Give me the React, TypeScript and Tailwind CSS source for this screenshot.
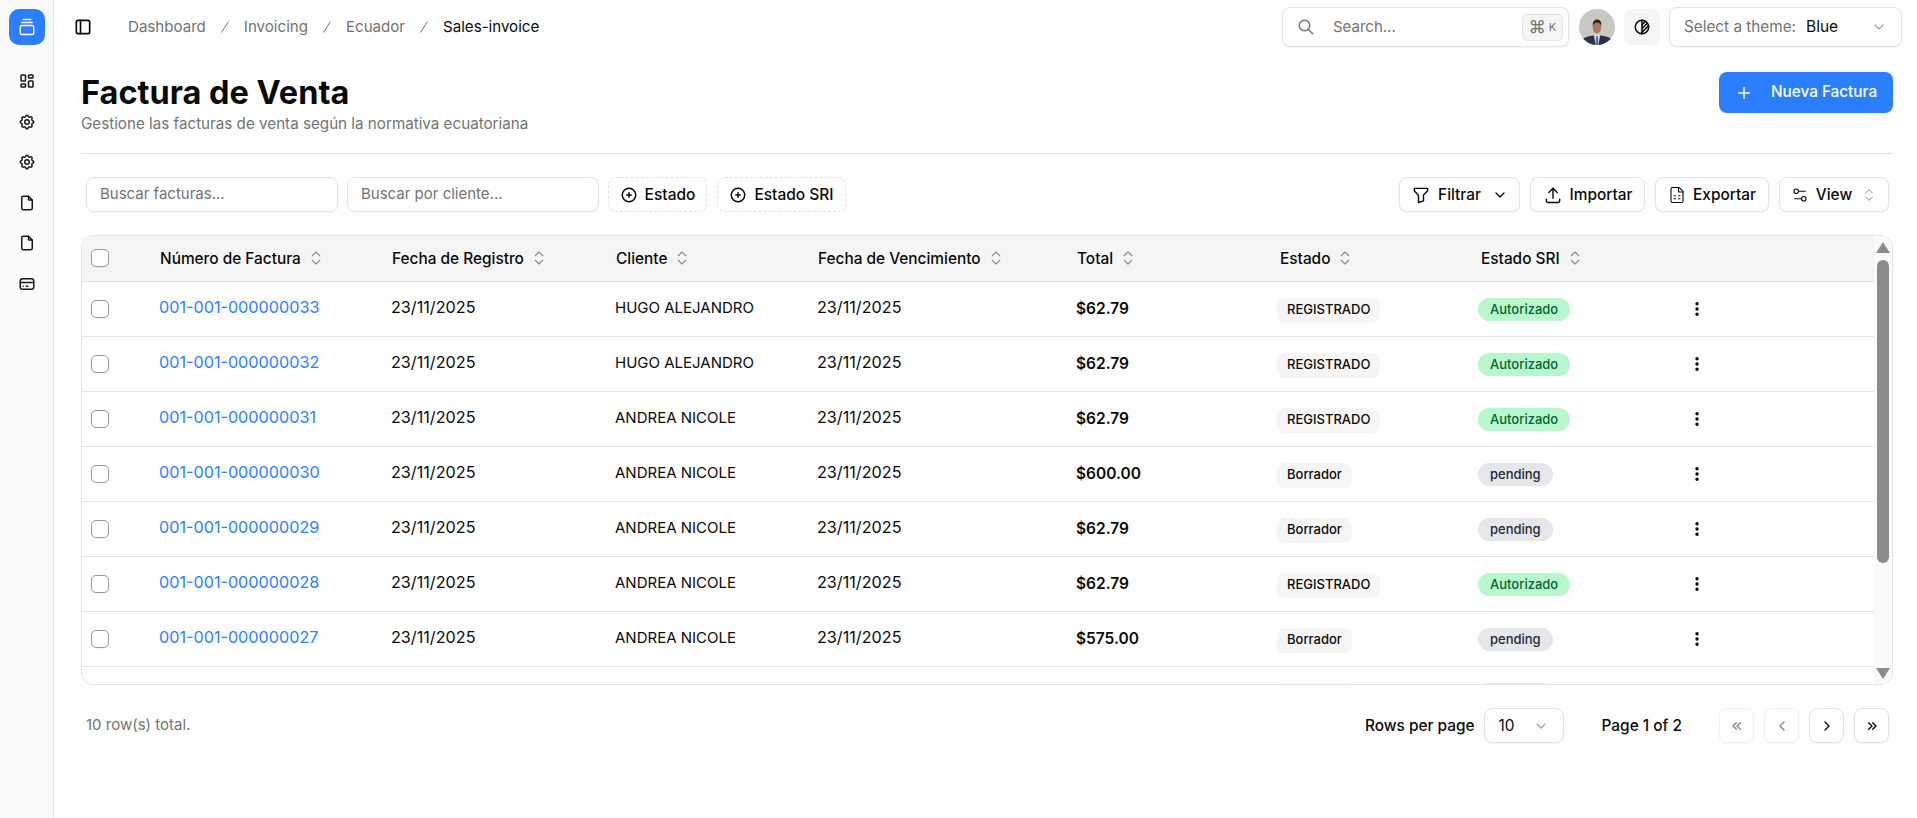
import {
  TbChevronDown,
  TbChevronLeft,
  TbChevronRight,
  TbChevronsLeft,
  TbChevronsRight,
  TbCircleHalf2,
  TbCirclePlus,
  TbCreditCard,
  TbDotsVertical,
  TbFile,
  TbFilter,
  TbLayoutDashboard,
  TbLayoutSidebar,
  TbPlus,
  TbSearch,
  TbSettings,
  TbUpload,
} from "react-icons/tb";
import { ChevronsUpDown, FileSpreadsheet, GalleryVerticalEnd, Settings2 } from "lucide-react";

type Row = {
  id: string;
  client: string;
  total: string;
  draft: boolean;
};

const rows: Row[] = [
  { id: "001-001-000000033", client: "HUGO ALEJANDRO", total: "$62.79", draft: false },
  { id: "001-001-000000032", client: "HUGO ALEJANDRO", total: "$62.79", draft: false },
  { id: "001-001-000000031", client: "ANDREA NICOLE", total: "$62.79", draft: false },
  { id: "001-001-000000030", client: "ANDREA NICOLE", total: "$600.00", draft: true },
  { id: "001-001-000000029", client: "ANDREA NICOLE", total: "$62.79", draft: true },
  { id: "001-001-000000028", client: "ANDREA NICOLE", total: "$62.79", draft: false },
  { id: "001-001-000000027", client: "ANDREA NICOLE", total: "$575.00", draft: true },
  { id: "001-001-000000026", client: "ANDREA NICOLE", total: "$62.79", draft: true },
];

const columns = [
  { label: "Número de Factura", pad: "pl-[9px]" },
  { label: "Fecha de Registro", pad: "pl-[9px]" },
  { label: "Cliente", pad: "pl-[9px]" },
  { label: "Fecha de Vencimiento", pad: "pl-[9px]" },
  { label: "Total", pad: "pl-[9px]" },
  { label: "Estado", pad: "pl-[11px]" },
  { label: "Estado SRI", pad: "pl-[11px]" },
];

function Avatar() {
  return (
    <svg viewBox="0 0 36 36" className="size-9 shrink-0 rounded-full">
      <rect width="36" height="36" fill="#c9c9c4" />
      <path d="M0 36c1-7 8-9 18-10 10 1 17 3 18 10z" fill="#2b3247" />
      <path d="M15 26h6l-1.500 10h-3z" fill="#dfe3ea" />
      <path d="M17.200 27h1.600l.8 9h-3.200z" fill="#56709f" />
      <ellipse cx="18" cy="18.500" rx="4.200" ry="6" fill="#a9785f" />
      <path d="M13.800 17.500c-.6-5 1.800-7 4.400-7s4.800 2 4 7c-.6-3-1.800-4-4.200-4s-3.600 1-4.200 4z" fill="#2a2320" />
    </svg>
  );
}

function Slash() {
  return (
    <svg viewBox="0 0 8 12" className="h-[12px] w-[8px] shrink-0">
      <path d="M7.500.500.500 11.500" stroke="#737373" strokeWidth="1" />
    </svg>
  );
}

function OutlineButton({ children, className = "" }: { children: React.ReactNode; className?: string }) {
  return (
    <button
      className={`flex h-[35px] items-center justify-center rounded-lg border border-[#e5e5e5] bg-white text-[15.4px] font-medium text-[#0a0a0a] shadow-xs ${className}`}
    >
      {children}
    </button>
  );
}

function Checkbox() {
  return <span className="block size-[18px] rounded-[5px] border border-[#9a9a9a] bg-white shadow-xs" />;
}

function ScrollBar() {
  return (
    <div className="flex w-[18px] shrink-0 flex-col items-center bg-[#fafafa]">
      <svg viewBox="0 0 14 11" className="mt-[6px] h-[11px] w-[14px] shrink-0">
        <path d="M7 0 14 11H0z" fill="#8c8c8c" />
      </svg>
      <div className="mt-[7px] h-[303px] w-[12px] shrink-0 rounded-full bg-[#8c8c8c]" />
      <svg viewBox="0 0 14 11" className="mt-auto mb-[5px] h-[11px] w-[14px] shrink-0">
        <path d="M7 11 14 0H0z" fill="#8c8c8c" />
      </svg>
    </div>
  );
}

function InvoiceTable() {
  return (
    <div className="mt-[23px] flex h-[450px] overflow-hidden rounded-xl border border-[#e5e5e5]">
      <div className="min-w-0 flex-1 overflow-hidden">
        <table className="w-[1792px] table-fixed border-collapse text-[16.200px] text-[#0a0a0a]">
          <colgroup>
            <col className="w-[69px]" />
            <col className="w-[232px]" />
            <col className="w-[224px]" />
            <col className="w-[202px]" />
            <col className="w-[259px]" />
            <col className="w-[201px]" />
            <col className="w-[201px]" />
            <col className="w-[210px]" />
            <col className="w-[194px]" />
          </colgroup>
          <thead>
            <tr className="h-[45px] border-b border-[#e5e5e5] bg-[#f5f5f5] text-[15.400px]">
              <th className="pl-[9px]">
                <Checkbox />
              </th>
              {columns.map((c) => (
                <th key={c.label} className={`${c.pad} pr-[9px] text-left font-medium`}>
                  <span className="flex items-center gap-[6px]">
                    {c.label}
                    <ChevronsUpDown className="size-[18px] text-[#8a8a8a]" strokeWidth={1.500} />
                  </span>
                </th>
              ))}
              <th />
            </tr>
          </thead>
          <tbody>
            {rows.map((r) => (
              <tr key={r.id} className="h-[55px] border-b border-[#e5e5e5]">
                <td className="pl-[9px]">
                  <Checkbox />
                </td>
                <td className="px-2 pb-[2px] text-[#2b7fff]">{r.id}</td>
                <td className="px-2 pb-[2px]">23/11/2025</td>
                <td className="px-2 text-[15px]">{r.client}</td>
                <td className="px-2 pb-[2px]">23/11/2025</td>
                <td className="px-2 text-[15.500px] font-semibold">{r.total}</td>
                <td className="px-2 pt-[2px]">
                  <span className="inline-flex h-[25px] items-center rounded-lg bg-[#f5f5f5] px-[10px] text-[13px] font-medium">
                    {r.draft ? "Borrador" : "REGISTRADO"}
                  </span>
                </td>
                <td className="px-2">
                  {r.draft ? (
                    <span className="inline-flex h-[23px] items-center rounded-full bg-[#e5e7eb] px-[12px] text-[13px] font-medium text-[#1e2939]">
                      pending
                    </span>
                  ) : (
                    <span className="inline-flex h-[23px] items-center rounded-full bg-[#b9f8cf] px-[12px] text-[13px] font-medium text-[#016630]">
                      Autorizado
                    </span>
                  )}
                </td>
                <td className="px-2">
                  <TbDotsVertical className="size-[18px]" strokeWidth={2.600} />
                </td>
              </tr>
            ))}
          </tbody>
        </table>
      </div>
      <ScrollBar />
    </div>
  );
}

export default function App() {
  return (
    <div className="flex h-screen overflow-hidden bg-white font-['Inter',sans-serif] text-[#0a0a0a]">
      <aside className="flex w-[54px] shrink-0 flex-col items-center border-r border-[#e5e5e5] bg-[#fafafa] pt-[9px]">
        <div className="mb-[16px] flex size-9 items-center justify-center rounded-[10px] bg-[#2b7fff] text-white">
          <GalleryVerticalEnd className="size-[18px]" strokeWidth={1.800} />
        </div>
        {[TbLayoutDashboard, TbSettings, TbSettings, TbFile, TbFile, TbCreditCard].map((Icon, i) => (
          <div key={i} className="flex h-[40.500px] items-center justify-center">
            <Icon className="size-[18px] text-[#171717]" />
          </div>
        ))}
      </aside>

      <main className="min-w-0 flex-1">
        <header className="flex h-[54px] items-center pr-[15px] pl-[19px]">
          <TbLayoutSidebar className="size-[20px]" />
          <nav className="ml-[35px] flex items-center gap-[15px] text-[15.100px] text-[#737373]">
            <span>Dashboard</span>
            <Slash />
            <span>Invoicing</span>
            <Slash />
            <span>Ecuador</span>
            <Slash />
            <span className="text-[#0a0a0a]">Sales-invoice</span>
          </nav>
          <div className="ml-auto flex items-center">
            <div className="flex h-[40px] w-[287px] items-center rounded-lg border border-[#e5e5e5] bg-white pr-[5px] pl-[14px] shadow-xs">
              <TbSearch className="size-[18px] text-[#737373]" />
              <span className="ml-[18px] text-[15px] text-[#737373]">Search...</span>
              <kbd className="ml-auto flex h-[27px] w-[41px] items-center justify-center gap-[3px] rounded-[5px] border border-[#e5e5e5] bg-[#f5f5f5] font-['Inter',sans-serif] text-[11px] text-[#737373]">
                <span className="text-[17px] leading-none">⌘</span>K
              </kbd>
            </div>
            <div className="ml-[10px]">
              <Avatar />
            </div>
            <button className="ml-[9px] flex size-9 items-center justify-center rounded-lg bg-[#f5f5f5]">
              <TbCircleHalf2 className="size-[18px]" />
            </button>
            <div className="ml-[9px] flex h-[40px] w-[233px] items-center rounded-lg border border-[#e5e5e5] bg-white px-[14px] text-[15.300px] shadow-xs">
              <span className="text-[#737373]">Select a theme:</span>
              <span className="ml-[10px] text-[15.500px]">Blue</span>
              <TbChevronDown className="ml-auto size-4 text-[#a3a3a3]" />
            </div>
          </div>
        </header>

        <div className="pr-[24px] pl-[27px]">
          <div className="flex items-start justify-between pt-[18px]">
            <div>
              <h1 className="text-[32.500px] leading-[42px] font-bold">Factura de Venta</h1>
              <p className="text-[15.200px] leading-[20px] text-[#737373]">
                Gestione las facturas de venta según la normativa ecuatoriana
              </p>
            </div>
            <button className="flex h-[41px] w-[174px] items-center rounded-lg bg-[#2b7fff] pl-[16px] text-[15.300px] font-medium text-white shadow-xs">
              <TbPlus className="size-[18px]" />
              <span className="ml-[18px]">Nueva Factura</span>
            </button>
          </div>

          <hr className="mt-[19px] border-[#e5e5e5]" />

          <div className="mt-[23px] flex items-center pr-[4px] pl-[5px]">
            <div className="flex h-[35px] w-[252px] items-center rounded-lg border border-[#e5e5e5] px-[13px] text-[15px] text-[#737373] shadow-xs">
              Buscar facturas...
            </div>
            <div className="ml-[9px] flex h-[35px] w-[252px] items-center rounded-lg border border-[#e5e5e5] px-[13px] text-[15px] text-[#737373] shadow-xs">
              Buscar por cliente...
            </div>
            <button className="ml-[9px] flex h-[35px] w-[99px] items-center justify-center gap-[7px] rounded-lg border border-dashed border-[#e5e5e5] text-[15.500px] font-medium">
              <TbCirclePlus className="size-[18px]" />
              Estado
            </button>
            <button className="ml-[10px] flex h-[35px] w-[129px] items-center justify-center gap-[7px] rounded-lg border border-dashed border-[#e5e5e5] text-[15.500px] font-medium">
              <TbCirclePlus className="size-[18px]" />
              Estado SRI
            </button>
            <div className="ml-auto flex items-center gap-[10px]">
              <OutlineButton className="w-[121px] gap-[7px]">
                <TbFilter className="size-[20px]" strokeWidth={1.700} />
                Filtrar
                <TbChevronDown className="ml-[4px] size-[16px]" />
              </OutlineButton>
              <OutlineButton className="w-[115px] gap-[7px]">
                <TbUpload className="size-[20px]" strokeWidth={1.700} />
                Importar
              </OutlineButton>
              <OutlineButton className="w-[114px] gap-[7px]">
                <FileSpreadsheet className="size-[18px]" strokeWidth={1.500} />
                Exportar
              </OutlineButton>
              <OutlineButton className="w-[110px] gap-[7px]">
                <Settings2 className="size-[18px]" strokeWidth={1.500} />
                View
                <ChevronsUpDown className="ml-[2px] size-[16px] text-[#8a8a8a]" strokeWidth={1.500} />
              </OutlineButton>
            </div>
          </div>

          <InvoiceTable />

          <div className="mt-[23px] flex items-center pr-[4px] pl-[5px]">
            <span className="text-[15px] text-[#737373]">10 row(s) total.</span>
            <div className="ml-auto flex items-center text-[15.400px] font-medium">
              <span>Rows per page</span>
              <div className="ml-[9px] flex h-[35px] w-[80px] items-center rounded-lg border border-[#e5e5e5] px-[14px] font-normal shadow-xs">
                10
                <TbChevronDown className="ml-auto size-4 text-[#a3a3a3]" />
              </div>
              <span className="ml-[38px]">Page 1 of 2</span>
              <div className="ml-[37px] flex gap-[10px]">
                <OutlineButton className="w-[35px] opacity-50">
                  <TbChevronsLeft className="size-4" />
                </OutlineButton>
                <OutlineButton className="w-[35px] opacity-50">
                  <TbChevronLeft className="size-4" />
                </OutlineButton>
                <OutlineButton className="w-[35px]">
                  <TbChevronRight className="size-4" />
                </OutlineButton>
                <OutlineButton className="w-[35px]">
                  <TbChevronsRight className="size-4" />
                </OutlineButton>
              </div>
            </div>
          </div>
        </div>
      </main>
    </div>
  );
}
